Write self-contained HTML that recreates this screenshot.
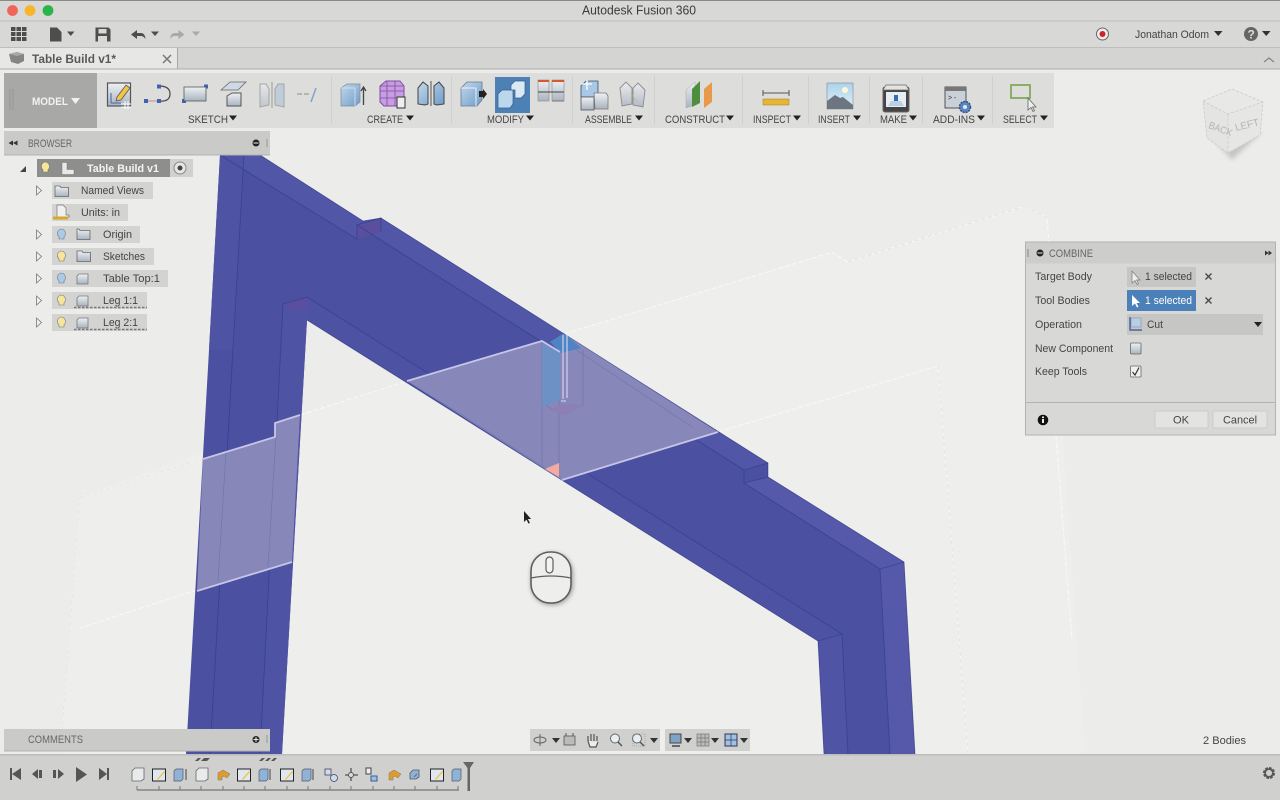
<!DOCTYPE html>
<html><head><meta charset="utf-8"><title>Autodesk Fusion 360</title>
<style>
html,body{margin:0;padding:0;width:1280px;height:800px;overflow:hidden;background:#ecedeb}
svg{display:block;filter:blur(.3px)}
text{font-family:"Liberation Sans",sans-serif;font-size:11px;fill:#444}
</style></head><body>
<svg width="1280" height="800" viewBox="0 0 1280 800" xmlns="http://www.w3.org/2000/svg">
<defs>
<linearGradient id="box" x1="0" y1="0" x2="0" y2="1"><stop offset="0" stop-color="#eef1f4"/><stop offset="1" stop-color="#a9b3c0"/></linearGradient>
<linearGradient id="bl" x1="0" y1="0" x2="1" y2="1"><stop offset="0" stop-color="#c3d8ec"/><stop offset="1" stop-color="#6f9cc8"/></linearGradient>
<linearGradient id="sky" x1="0" y1="0" x2="0" y2="1"><stop offset="0" stop-color="#a9d4ee"/><stop offset="1" stop-color="#e4f0f4"/></linearGradient>
<filter id="bs" x="-30%" y="-30%" width="160%" height="160%"><feGaussianBlur stdDeviation="2.5"/></filter>
</defs>

<!-- viewport background -->
<rect width="1280" height="800" fill="#ecedeb"/>
<polygon points="62,754 80,497 300,415 564,334 800,262 832,252 848,262 1025,206 1047,218 1085,754" fill="#eeefed"/>
<g fill="none" stroke="#f9f9f8" stroke-width="1" stroke-dasharray="5 2">
<polyline points="80,497 203,459"/><polyline points="300,415 407,381"/><polyline points="564,334 800,262 832,252 848,262 1025,206 1047,218 1049,243"/>
<polyline points="62,730 80,497"/><polyline points="718,432 938,366 968,754"/><polyline points="197,590 80,628"/>
<polyline points="1056,436 1072,640"/>
</g>
<g fill="none" stroke="#dcdddb" stroke-width=".6" stroke-dasharray="4 3">
<polyline points="80,497 203,459"/><polyline points="62,730 80,497"/><polyline points="938,366 968,754"/><polyline points="1025,206 1047,218"/><polyline points="848,262 1025,206"/>
</g>

<!-- blue frame -->
<polygon points="220,155 260,155 363,221 381,218 768,463 768,477 904,562 915,754 824,754 818,641 307,320 282,754 186,754 209,350" fill="#4c50a0"/>
<polygon points="220,155 260,155 363,221 357,225 357,239" fill="#5256a7"/>
<polygon points="381,218 768,463 744,470 357,225" fill="#5256a7"/>
<polygon points="744,483 768,477 904,562 880,569" fill="#5659aa"/>
<polygon points="880,569 904,562 915,754 890,754" fill="#5659aa"/>
<polygon points="357,225 381,218 381,232 357,239" fill="#5a4f9e"/>
<polygon points="283,304 307,297 842,634 818,641 307,320" fill="#4e52a3"/>
<polygon points="283,304 307,297 307,320 282,754 260,754" fill="#4f53a4"/>
<polygon points="818,641 842,634 848,754 824,754" fill="#5054a4"/>
<polygon points="283,304 307,297 307,310 290,310" fill="#5a4f9e"/>
<polygon points="220,155 244,155 234,350 209,350" fill="#4f53a4"/>
<g fill="none" stroke="#2f3c92" stroke-width=".9" opacity=".7">
<polyline points="220,155 357,239 357,225 744,470 744,483 880,569 890,754"/>
<polyline points="880,569 904,562"/>
<polyline points="744,470 768,463"/><polyline points="744,483 768,477"/>
<polyline points="244,155 210,754"/>
<polyline points="357,225 381,218 381,232"/>
<polyline points="283,304 307,297 842,634 848,754"/>
<polyline points="283,304 260,754"/>
<polyline points="818,641 842,634"/>
</g>
<polyline points="260,155 363,221 381,218 768,463 768,477 904,562 915,754" fill="none" stroke="#27307f" stroke-width=".8" opacity=".6"/>
<polyline points="307,320 818,641 824,754" fill="none" stroke="#27307f" stroke-width=".8" opacity=".6"/>

<!-- translucent plane bands -->
<polygon points="203,459 275,437 275,423 300,415 292,562 197,591" fill="#8787ba"/>
<g fill="none" stroke="#6c70ad" stroke-width=".7" opacity=".8"><polyline points="226,452 218,582"/><polyline points="276,436 268,567"/></g>
<polygon points="407,381 542,341 560,352 564,334 718,432 562,480" fill="#8787ba"/>
<g fill="none" stroke="#6b6fae" stroke-width=".7" opacity=".75">
<polyline points="407,381 470,420 545,468 561,477"/><polyline points="572,347 692,427"/>
<polyline points="542,343 542,466"/><polyline points="559,400 559,463"/><polyline points="583,350 583,405 560,414 542,403"/>
</g>
<polygon points="542,343 560,353 560,400 542,407" fill="#6d90c5"/>
<polygon points="550,342 564,333 581,348 561,353" fill="#4f84c4"/>
<polygon points="560,404 583,405 564,416 550,410" fill="#8b7fb6"/>
<polygon points="545,469 559,463 559,477" fill="#f5a9a0"/>
<g fill="none" stroke="#c6c6e8" stroke-width="1.800">
<polyline points="203,459 275,437 275,423 300,415"/><polyline points="197,591 292,562"/>
<polyline points="407,381 542,341 560,352"/><polyline points="562,480 718,432"/>
</g>
<path d="M563 335V399M567 335V398M561 401h5" fill="none" stroke="#d9daf0" stroke-width="1.100"/>

<!-- cursor + mouse -->
<path d="M524 511v11l2.500-2.400 2 4 1.400-.7-2-3.900h3.200z" fill="#222"/>
<rect x="531" y="553" width="42" height="52" rx="20" fill="#555" opacity=".55" filter="url(#bs)"/>
<rect x="531" y="552" width="40" height="51" rx="19" fill="#eeeeec" stroke="#5f5f5f" stroke-width="1.600"/>
<path d="M531 578q20-4 40 0" fill="none" stroke="#5f5f5f" stroke-width="1.300"/>
<rect x="546" y="557" width="7" height="16" rx="3.500" fill="#f3f3f1" stroke="#5f5f5f" stroke-width="1.200"/>

<!-- view cube -->
<polygon points="1210,135 1262,132 1232,160" fill="#a0a09e" opacity=".5" filter="url(#bs)"/>
<polygon points="1203,101 1232,89 1263,102 1228,114" fill="#e8e8e6"/>
<polygon points="1203,101 1228,114 1228,153 1207,138" fill="#e4e4e2"/>
<polygon points="1228,114 1263,102 1260,135 1228,153" fill="#e6e6e4"/>
<g fill="none" stroke="#cbcbc9" stroke-width=".8" stroke-dasharray="3 1.500"><polyline points="1203,101 1232,89 1263,102 1260,135 1228,153 1207,138 1203,101"/><polyline points="1203,101 1228,114 1263,102"/><polyline points="1228,114 1228,153"/></g>
<text transform="translate(1208,128) rotate(20) scale(.9,1)" style="font-size:10px;fill:#b4b4b2">BACK</text>
<text transform="translate(1236,131) rotate(-14)" style="font-size:10px;fill:#b4b4b2">LEFT</text>

<!-- title bar -->
<rect width="1280" height="21" fill="#d8d8d6"/>
<rect width="1280" height="1" fill="#8a8a88"/>
<circle cx="12.500" cy="10.500" r="5.400" fill="#f0655a"/><circle cx="30" cy="10.500" r="5.400" fill="#f6b52d"/><circle cx="48" cy="10.500" r="5.400" fill="#2cb34a"/>
<text x="582" y="14.500" textLength="114" lengthAdjust="spacingAndGlyphs" style="font-size:12.500px;fill:#3c3c3c">Autodesk Fusion 360</text>

<!-- app bar -->
<rect y="21" width="1280" height="27" fill="#d8d9d7"/>
<rect y="20.500" width="1280" height="1" fill="#bdbdbb"/>
<rect y="47.500" width="1280" height="1" fill="#a4a4a2"/>
<g fill="#4e4e4e"><path d="M11 27h4.500v4H11zM16.500 27H21v4h-4.500zM22 27h4.500v4H22zM11 32h4.500v4H11zM16.500 32H21v4h-4.500zM22 32h4.500v4H22zM11 37h4.500v4H11zM16.500 37H21v4h-4.500zM22 37h4.500v4H22z"/>
<path d="M50 27.500h7l4.500 4.500v9.500H50z"/><path d="M67 31.500h7.500l-3.750 4.500z"/>
<path d="M95.500 27.500h13l2 2v12h-15zM98.500 29v4.500h8V29zM98 36v5.500h9V36z" fill-rule="evenodd"/>
<path d="M131 34.500l6-4.500v3h4q4 0 4.500 6-2-3-4.500-3h-4v3z"/><path d="M151 31.500h8l-4 4.500z"/></g>
<g fill="#a9a9a7"><path d="M184.500 34.500l-6-4.500v3h-4q-4 0-4.500 6 2-3 4.500-3h4v3z"/><path d="M192 31.500h8l-4 4.500z"/></g>
<circle cx="1102.500" cy="34" r="6" fill="#eee" stroke="#666" stroke-width="1"/><circle cx="1102.500" cy="34" r="3" fill="#d2232a"/>
<text x="1135" y="38" textLength="74" lengthAdjust="spacingAndGlyphs">Jonathan Odom</text>
<path d="M1214 31h8.500l-4.250 5z" fill="#333"/>
<circle cx="1251" cy="34" r="7" fill="#666"/><text x="1247.500" y="38.500" style="font-size:12px;font-weight:bold;fill:#ddd">?</text>
<path d="M1262 31h8.500l-4.250 5z" fill="#333"/>

<!-- tab bar -->
<rect y="48" width="1280" height="21" fill="#d4d5d3"/>
<rect y="48" width="177" height="21" fill="#e7e8e6"/>
<rect x="177" y="48" width="1" height="21" fill="#a8a8a6"/>
<rect y="68.500" width="1280" height="1" fill="#aeaeac"/>
<path d="M9 54l8-2 7 2v7l-6 3-7-2z" fill="#858583"/><path d="M9 54l8 2 7-2-7-2z" fill="#a9a9a7"/>
<text x="32" y="63" textLength="84" lengthAdjust="spacingAndGlyphs" style="font-weight:bold;font-size:11.500px;fill:#585858">Table Build v1*</text>
<path d="M163 55l8 8M171 55l-8 8" stroke="#777" stroke-width="1.500"/>
<path d="M1264 62l5-4 5 4" fill="none" stroke="#888" stroke-width="1.300"/>

<!-- toolbar -->
<rect x="4" y="73" width="1050" height="55" fill="#dddedc"/>
<rect x="4" y="73" width="93" height="55" fill="#a8a9a7"/>
<path d="M10 89v21M13 89v21" stroke="#8e8e8c" stroke-width=".7"/>
<text x="32" y="105" textLength="36" lengthAdjust="spacingAndGlyphs" style="font-weight:bold;fill:#f2f2f2">MODEL</text>
<path d="M71 98h9l-4.500 6z" fill="#f2f2f2"/>
<g fill="#d0d0ce"><rect x="331" y="76" width="1" height="48"/><rect x="451" y="76" width="1" height="48"/><rect x="572" y="76" width="1" height="48"/><rect x="654" y="76" width="1" height="48"/><rect x="742" y="76" width="1" height="48"/><rect x="808" y="76" width="1" height="48"/><rect x="869" y="76" width="1" height="48"/><rect x="922" y="76" width="1" height="48"/><rect x="992" y="76" width="1" height="48"/></g>
<g>
<text x="188" y="123" textLength="40" lengthAdjust="spacingAndGlyphs">SKETCH</text>
<text x="367" y="123" textLength="36" lengthAdjust="spacingAndGlyphs">CREATE</text>
<text x="487" y="123" textLength="37" lengthAdjust="spacingAndGlyphs">MODIFY</text>
<text x="585" y="123" textLength="47" lengthAdjust="spacingAndGlyphs">ASSEMBLE</text>
<text x="665" y="123" textLength="60" lengthAdjust="spacingAndGlyphs">CONSTRUCT</text>
<text x="753" y="123" textLength="38" lengthAdjust="spacingAndGlyphs">INSPECT</text>
<text x="818" y="123" textLength="32" lengthAdjust="spacingAndGlyphs">INSERT</text>
<text x="880" y="123" textLength="27" lengthAdjust="spacingAndGlyphs">MAKE</text>
<text x="933" y="123" textLength="42" lengthAdjust="spacingAndGlyphs">ADD-INS</text>
<text x="1003" y="123" textLength="34" lengthAdjust="spacingAndGlyphs">SELECT</text>
</g>
<g fill="#222"><path d="M229 115.500h8l-4 5zM406 115.500h8l-4 5zM526 115.500h8l-4 5zM635 115.500h8l-4 5zM726 115.500h8l-4 5zM793 115.500h8l-4 5zM853 115.500h8l-4 5zM909 115.500h8l-4 5zM977 115.500h8l-4 5zM1040 115.500h8l-4 5z"/></g>

<!-- sketch icons -->
<rect x="107.500" y="83" width="23" height="23" fill="url(#box)" stroke="#555" stroke-width="1.200"/>
<path d="M111 103V93M111 103h10" stroke="#3f64b0" stroke-width="1" fill="none"/>
<path d="M117 97l9-12 4 3-9 12-5 1z" fill="#f0c54a" stroke="#555" stroke-width=".8"/>
<path d="M121 104h10M121 107h10M125 101v8M128 101v8" stroke="#fff" stroke-width="1"/>
<path d="M145 101h14" stroke="#c48a8a" stroke-width="1"/><path d="M159 86q11 0 11 8t-11 7" fill="none" stroke="#444" stroke-width="1.200"/>
<g fill="#3f64b0"><rect x="144" y="99" width="4" height="4"/><rect x="157" y="99" width="4" height="4"/><rect x="157" y="84.500" width="4" height="4"/>
<rect x="182" y="99" width="4" height="4"/><rect x="204" y="84.500" width="4" height="4"/></g>
<rect x="184" y="87" width="22" height="14" fill="url(#box)" stroke="#555" stroke-width=".8"/>
<path d="M221 90l9-8h16l-8 8z" fill="#cfd9e6" stroke="#666" stroke-width=".8"/>
<path d="M227 96l5-3h9v13h-14z" fill="url(#box)" stroke="#555" stroke-width="1"/>
<g opacity=".55"><path d="M260 84h6l3 5v16l-9 2z" fill="url(#box)" stroke="#777"/><path d="M272 82v26" stroke="#666"/><path d="M284 84h-6l-3 5v16l9 2z" fill="#a9bfd8" stroke="#777"/>
<path d="M297 94h12" stroke="#666" stroke-width="1.200" stroke-dasharray="5 2"/><path d="M316 88l-5 14" stroke="#3f6fc0" stroke-width="1.500"/></g>

<!-- create icons -->
<path d="M341 88l6-4h13v18l-5 4h-14z" fill="url(#bl)" stroke="#7a8b9d" stroke-width=".7"/><path d="M341 88h14v18" fill="none" stroke="#dbe7f2" stroke-width=".8"/>
<path d="M363.500 105V88M361 91l2.500-4 2.500 4" fill="none" stroke="#444" stroke-width="1.300"/>
<path d="M380 86l6-5h14l4 5v17l-5 3h-15l-4-4z" fill="#c79ce0" stroke="#7d4fa0"/>
<path d="M380 91h24M380 98h24M387 81v25M395 81v25M380 86h24" stroke="#7d4fa0" stroke-width=".8"/>
<rect x="397" y="97" width="8" height="11" fill="#eee" stroke="#333"/>
<path d="M418 88l5-6 5 4v18l-3 1-7-1zM444 88l-5-6-5 4v18l3 1 7-1z" fill="url(#bl)" stroke="#444" stroke-width="1"/><path d="M431 81v25" stroke="#555"/>
<!-- modify icons -->
<path d="M461 88l6-6h15v18l-5 6h-16z" fill="url(#bl)" stroke="#6a7b8d" stroke-width=".8"/><path d="M461 88h15v18" fill="none" stroke="#fff" stroke-width=".8"/>
<path d="M479 91h4v-2l4 5-4 5v-2h-4z" fill="#222"/>
<rect x="495" y="77" width="35" height="36" fill="#4d80b4"/>
<path d="M498 94l4-4h11v14l-3 4h-12z" fill="#bcd6ee" stroke="#33608e" stroke-width=".7"/>
<path d="M511 85l4-4h10v13l-4 4h-6v-8h-4z" fill="#dbe9f5" stroke="#33608e" stroke-width=".7"/>
<rect x="538" y="80" width="11" height="21" fill="url(#box)" stroke="#888" stroke-width=".6"/><rect x="552" y="80" width="12" height="21" fill="url(#box)" stroke="#888" stroke-width=".6"/>
<path d="M538 81h11M552 81h12" stroke="#d85a2a" stroke-width="2"/><path d="M538 92h26" stroke="#444" stroke-width="1"/><path d="M552 101h12" stroke="#777"/>
<!-- assemble -->
<path d="M581 86l5-5h12v16h-17z" fill="#a9c8e6" stroke="#3a4f66" stroke-width=".8"/>
<rect x="581" y="97" width="13" height="13" fill="url(#box)" stroke="#555" stroke-width=".8"/>
<path d="M594 93h12l2 3v13h-13z" fill="url(#box)" stroke="#777" stroke-width=".8"/>
<path d="M582 84h10M587 80v10" stroke="#fff" stroke-width="1.300"/>
<g opacity=".8"><path d="M620 88l6-6 6 6v16l-10 2zM645 90l-7-7-5 5v17l10 2z" fill="url(#box)" stroke="#777" stroke-width=".9"/><path d="M631 93l6 9" stroke="#d0a060" stroke-dasharray="2 1"/></g>
<!-- construct -->
<path d="M686 90l9-8v23l-9 3z" fill="url(#box)" stroke="#aaa" stroke-width=".5"/>
<path d="M692 89l8-8v22l-8 4z" fill="#4e8f3f"/>
<path d="M704 89l8-7v20l-8 6z" fill="#e89a4a"/>
<!-- inspect -->
<path d="M763 93h26M763 90v6M789 90v6" stroke="#555" stroke-width="1" fill="none"/>
<rect x="763" y="99" width="26" height="6" fill="#e8b637" stroke="#a07a20" stroke-width=".5"/>
<!-- insert -->
<rect x="827" y="83" width="26" height="26" fill="url(#sky)" stroke="#777" stroke-width=".5"/>
<circle cx="845" cy="90" r="3" fill="#fff8d8"/>
<path d="M827 109v-8l8-6 5 3 3-1 10 8v4z" fill="#6c7580"/>
<!-- make -->
<rect x="883" y="87" width="26" height="25" rx="2" fill="#444" stroke="#666"/>
<rect x="886" y="92" width="20" height="15" fill="#e8edf2"/>
<path d="M888 106h16l-3-5h-10z" fill="#bcd0e4"/><path d="M894 95h4v6h-4z" fill="#2f6fb5"/>
<path d="M883 90l3-5h20l3 5z" fill="#e3e3e1" stroke="#666" stroke-width=".7"/>
<!-- add-ins -->
<rect x="945" y="87" width="21" height="21" fill="#c9d0d8" stroke="#333" stroke-width=".8"/>
<rect x="945" y="87" width="21" height="4" fill="#777"/>
<text x="948" y="100" style="font-size:7px;fill:#333">&gt; -</text>
<circle cx="965" cy="107" r="5.500" fill="#5a86c2" stroke="#2f4f88" stroke-width="1.500" stroke-dasharray="2 1"/><circle cx="965" cy="107" r="2" fill="#dfe9f5"/>
<!-- select -->
<rect x="1011" y="85" width="19" height="13" fill="none" stroke="#84a85a" stroke-width="1.800"/>
<path d="M1028 98v12l3-2.500 2 4 1.500-.8-2-3.700h3.500z" fill="#eee" stroke="#666" stroke-width=".8"/>

<!-- browser -->
<rect x="4" y="131" width="266" height="24" fill="#cacbc9"/>
<rect x="4" y="154.500" width="266" height="1" fill="#b2b2b0"/>
<path d="M13 140.500l-4.500 2.500 4.500 2.500zM17.500 140.500l-4.500 2.500 4.500 2.500z" fill="#333"/>
<text x="28" y="147" textLength="44" lengthAdjust="spacingAndGlyphs" style="fill:#666">BROWSER</text>
<circle cx="256" cy="143" r="3.500" fill="#222"/><rect x="253.500" y="142.500" width="5" height="1" fill="#eee"/>
<path d="M267 139v8" stroke="#888" stroke-width=".8"/>

<rect x="37" y="159" width="133" height="18" fill="#8e8f8d"/><rect x="170" y="159" width="23" height="18" fill="#d1d2d0"/>
<rect x="52" y="182" width="101" height="17" fill="#d3d4d2"/>
<rect x="52" y="204" width="76" height="17" fill="#d3d4d2"/>
<rect x="52" y="226" width="88" height="17" fill="#d3d4d2"/>
<rect x="52" y="248" width="102" height="17" fill="#d3d4d2"/>
<rect x="52" y="270" width="116" height="17" fill="#d3d4d2"/>
<rect x="52" y="292" width="95" height="17" fill="#d3d4d2"/>
<rect x="52" y="314" width="95" height="17" fill="#d3d4d2"/>
<path d="M20 172l6-6v6z" fill="#444"/>
<g fill="#f0f0ee" stroke="#777" stroke-width=".8"><path d="M36.500 186l5 4.500-5 4.500z"/><path d="M36.500 230l5 4.500-5 4.500z"/><path d="M36.500 252l5 4.500-5 4.500z"/><path d="M36.500 274l5 4.500-5 4.500z"/><path d="M36.500 296l5 4.500-5 4.500z"/><path d="M36.500 318l5 4.500-5 4.500z"/></g>
<!-- bulbs -->
<g stroke="#777" stroke-width=".6">
<path d="M45 162a4.500 4.500 0 0 1 3 7.800v2.200h-5v-2.200A4.500 4.500 0 0 1 45 162z" fill="#f6e59a"/>
<path d="M61 229a4.500 4.500 0 0 1 3 7.800v2.200h-5v-2.200A4.500 4.500 0 0 1 61 229z" fill="#a8cbe8"/>
<path d="M61 251a4.500 4.500 0 0 1 3 7.800v2.200h-5v-2.200A4.500 4.500 0 0 1 61 251z" fill="#f6e59a"/>
<path d="M61 273a4.500 4.500 0 0 1 3 7.800v2.200h-5v-2.200A4.500 4.500 0 0 1 61 273z" fill="#a8cbe8"/>
<path d="M61 295a4.500 4.500 0 0 1 3 7.800v2.200h-5v-2.200A4.500 4.500 0 0 1 61 295z" fill="#f6e59a"/>
<path d="M61 317a4.500 4.500 0 0 1 3 7.800v2.200h-5v-2.200A4.500 4.500 0 0 1 61 317z" fill="#f6e59a"/>
</g>
<path d="M62 162.500h5v7h7v5H62z" fill="#e9e9e7" stroke="#777" stroke-width=".5"/>
<circle cx="180" cy="168" r="6" fill="#e8e8e6" stroke="#888"/><circle cx="180" cy="168" r="2.500" fill="#444"/>
<!-- folders -->
<g stroke="#666" stroke-width=".8"><path d="M55 186h5l1 1.500h7.500v9H55z" fill="url(#box)"/>
<path d="M77 229h2l1 1.500h10v9H77z" fill="url(#box)"/><path d="M77 251h5l1 1.500h7.500v9H77z" fill="url(#box)"/></g>
<path d="M57 205h6l3 3v7h3v2H57z" fill="#f0f0ee" stroke="#777" stroke-width=".7"/><rect x="53" y="216.500" width="15" height="3" fill="#d6a92e"/>
<g stroke="#777" stroke-width=".8" fill="url(#box)"><path d="M79 274h9v10h-11v-8z"/><path d="M79 296h9v10h-11v-8z"/><path d="M79 318h9v10h-11v-8z"/></g>
<g>
<text x="87" y="172" textLength="72" lengthAdjust="spacingAndGlyphs" style="font-weight:bold;fill:#f4f4f4">Table Build v1</text>
<text x="81" y="194" textLength="63" lengthAdjust="spacingAndGlyphs">Named Views</text>
<text x="81" y="216" textLength="39" lengthAdjust="spacingAndGlyphs">Units: in</text>
<text x="103" y="238" textLength="29" lengthAdjust="spacingAndGlyphs">Origin</text>
<text x="103" y="260" textLength="42" lengthAdjust="spacingAndGlyphs">Sketches</text>
<text x="103" y="282" textLength="57" lengthAdjust="spacingAndGlyphs">Table Top:1</text>
<text x="103" y="304" textLength="35" lengthAdjust="spacingAndGlyphs">Leg 1:1</text>
<text x="103" y="326" textLength="35" lengthAdjust="spacingAndGlyphs">Leg 2:1</text>
</g>
<path d="M74 307.500h73M74 329.500h73" stroke="#777" stroke-width="1.500" stroke-dasharray="2.500 1.500"/>

<!-- comments -->
<rect x="4" y="729" width="266" height="22" fill="#cacbc9"/>
<rect x="4" y="750.500" width="266" height="1" fill="#b2b2b0"/>
<text x="28" y="743" textLength="55" lengthAdjust="spacingAndGlyphs" style="fill:#666">COMMENTS</text>
<circle cx="256" cy="739.500" r="3.500" fill="#222"/><path d="M253.500 739.500h5M256 737v5" stroke="#eee" stroke-width="1"/>
<path d="M267 735v8" stroke="#888" stroke-width=".8"/>

<!-- nav bar -->
<rect x="530" y="729" width="130" height="22" fill="#d0d1cf"/>
<rect x="665" y="729" width="85" height="22" fill="#d0d1cf"/>
<g fill="#333"><path d="M552 738h8l-4 5zM650 738h8l-4 5zM684 738h8l-4 5zM711 738h8l-4 5zM740 738h8l-4 5z"/></g>
<ellipse cx="540" cy="740" rx="6" ry="3" fill="none" stroke="#666"/><path d="M540 734v12" stroke="#666"/>
<rect x="564" y="736" width="11" height="9" fill="#bbb" stroke="#555" stroke-width=".8"/><path d="M566 733v3M573 733v3" stroke="#555"/>
<path d="M588 741v-5M591 741v-7M594 741v-7M597 741v-5M588 741l2 6h6l2-5" fill="#eee" stroke="#555" stroke-width="1.200"/>
<circle cx="615" cy="738.500" r="4.500" fill="#e8eef2" stroke="#666"/><path d="M618 742l4 4" stroke="#555" stroke-width="1.500"/>
<circle cx="637" cy="738.500" r="4.500" fill="#e8eef2" stroke="#666"/><path d="M640 742l4 4" stroke="#555" stroke-width="1.500"/><rect x="633" y="734" width="12" height="12" fill="none" stroke="#888" stroke-width=".6" stroke-dasharray="1 1"/>
<rect x="670" y="734" width="11" height="9" fill="#7fa3c8" stroke="#444"/><path d="M672 746h8" stroke="#444" stroke-width="1.500"/>
<g stroke="#777" stroke-width=".7" fill="#bbb"><rect x="697" y="734" width="12" height="12"/><path d="M701 734v12M705 734v12M697 738h12M697 742h12" fill="none"/></g>
<rect x="725" y="734" width="12" height="12" fill="#9ec2e2" stroke="#335"/><path d="M731 734v12M725 740h12" stroke="#335" stroke-width=".7"/>
<text x="1203" y="744" textLength="43" lengthAdjust="spacingAndGlyphs">2 Bodies</text>

<!-- combine panel -->
<rect x="1025.500" y="242" width="250" height="193" fill="#d8d9d7" stroke="#b3b3b1" stroke-width="1"/>
<rect x="1026" y="242.500" width="249" height="21" fill="#cdcecc"/>
<rect x="1026" y="402" width="249" height="1" fill="#b3b3b1"/>
<path d="M1028 249v8" stroke="#888"/>
<circle cx="1040" cy="253" r="3.500" fill="#222"/><rect x="1037.500" y="252.500" width="5" height="1" fill="#eee"/>
<text x="1049" y="257" textLength="44" lengthAdjust="spacingAndGlyphs" style="fill:#666">COMBINE</text>
<path d="M1265 250.500l3.500 2.500-3.500 2.500zM1268.500 250.500l3.500 2.500-3.500 2.500z" fill="#333"/>
<g>
<text x="1035" y="280" textLength="57" lengthAdjust="spacingAndGlyphs">Target Body</text>
<text x="1035" y="304" textLength="55" lengthAdjust="spacingAndGlyphs">Tool Bodies</text>
<text x="1035" y="328" textLength="47" lengthAdjust="spacingAndGlyphs">Operation</text>
<text x="1035" y="352" textLength="78" lengthAdjust="spacingAndGlyphs">New Component</text>
<text x="1035" y="375" textLength="52" lengthAdjust="spacingAndGlyphs">Keep Tools</text>
</g>
<rect x="1127" y="267" width="69" height="20" fill="#c6c7c5"/>
<rect x="1127" y="290" width="69" height="21" fill="#4b80b8"/>
<rect x="1127" y="314" width="136" height="21" fill="#c6c7c5"/>
<path d="M1132 271v12l3-2.500 2 4 1.500-.8-2-3.700h3.500z" fill="#eee" stroke="#777" stroke-width=".7"/>
<path d="M1132 295v11l3-2.500 2 4 1.500-.8-2-3.700h3.500z" fill="#fff"/>
<text x="1145" y="280" textLength="47" lengthAdjust="spacingAndGlyphs">1 selected</text>
<text x="1145" y="304" textLength="47" lengthAdjust="spacingAndGlyphs" style="fill:#fff">1 selected</text>
<path d="M1205.500 273.500l6 6M1211.500 273.500l-6 6M1205.500 297.500l6 6M1211.500 297.500l-6 6" stroke="#444" stroke-width="1.300"/>
<rect x="1131" y="318" width="10" height="9" fill="#b9cde4" stroke="#7d94b0" stroke-width=".6"/>
<path d="M1130 317v13h12" fill="none" stroke="#38508f" stroke-width="1.200"/>
<text x="1147" y="328" textLength="16" lengthAdjust="spacingAndGlyphs">Cut</text>
<path d="M1254 322h8l-4 5z" fill="#222"/>
<rect x="1130.500" y="343" width="10.500" height="11" rx="1" fill="url(#box)" stroke="#666" stroke-width=".8"/>
<rect x="1130.500" y="366" width="10.500" height="11" rx="1" fill="#f0f0ee" stroke="#666" stroke-width=".8"/>
<path d="M1132.500 372l2.500 3 4-7.500" fill="none" stroke="#333" stroke-width="1.200"/>
<circle cx="1043" cy="420" r="5.300" fill="#111"/><rect x="1042" y="419" width="2" height="4" fill="#eee"/><rect x="1042" y="416.500" width="2" height="1.600" fill="#eee"/>
<rect x="1155" y="411" width="53" height="17" fill="#e3e4e2" stroke="#c4c4c2" stroke-width=".7"/>
<rect x="1213" y="411" width="54" height="17" fill="#e3e4e2" stroke="#c4c4c2" stroke-width=".7"/>
<text x="1173" y="423.500" textLength="16" lengthAdjust="spacingAndGlyphs">OK</text>
<text x="1223" y="423.500" textLength="34" lengthAdjust="spacingAndGlyphs">Cancel</text>

<!-- timeline -->
<rect y="754" width="1280" height="46" fill="#d0d1cf"/>
<rect y="754" width="1280" height="1.500" fill="#bcbcba"/>
<g fill="#555">
<path d="M10 768h2v12h-2zM21 768v12l-9-6z"/><path d="M32 774l6-5v10z"/><rect x="39" y="770" width="3" height="8"/>
<rect x="53" y="770" width="3" height="8"/><path d="M64 774l-6-5v10z"/>
<path d="M76 767v15l11-7.500z"/>
<path d="M99 768v12l8-6z"/><rect x="107" y="768" width="2" height="12"/>
</g>
<path d="M137 790H459" stroke="#777" stroke-width="1.300"/>
<g stroke="#777" stroke-width="1"><path d="M137 786v4M159 786v4M180 786v4M201 786v4M223 786v4M244 786v4M265 786v4M287 786v4M308 786v4M330 786v4M351 786v4M373 786v4M394 786v4M415 786v4M437 786v4M458 786v4"/></g>
<!-- timeline items -->
<g stroke="#666" stroke-width=".8" fill="#e8eaec"><path d="M132 771l3-3h9v11l-3 2h-9z"/><path d="M196 771l3-3h9v11l-3 2h-9z"/></g>
<g stroke="#222" stroke-width="1" fill="#dfe8f1">
<rect x="152.500" y="769" width="13" height="12"/><rect x="237.500" y="769" width="13" height="12"/><rect x="280.500" y="769" width="13" height="12"/><rect x="430.500" y="769" width="13" height="12"/></g>
<g fill="#f0c54a"><path d="M157 779l7-8 1 1-7 8zM242 779l7-8 1 1-7 8zM285 779l7-8 1 1-7 8zM435 779l7-8 1 1-7 8z"/></g>
<g fill="#8fb3d8" stroke="#556" stroke-width=".7"><path d="M174 771l2-2h7v10l-2 2h-7z"/><path d="M259 771l2-2h7v10l-2 2h-7z"/><path d="M302 771l2-2h7v10l-2 2h-7z"/><path d="M452 771l2-2h7v10l-2 2h-7z"/></g>
<g stroke="#444" stroke-width="1" fill="none"><path d="M186 780v-11M270 780v-11M313 780v-11"/></g>
<g fill="#e09b2e" stroke="#777" stroke-width=".5"><path d="M218 780v-7l5-3 7 4-3 4-3-2-2 1v3z"/><path d="M389 780v-7l5-3 7 4-3 4-3-2-2 1v3z"/></g>
<g fill="#555"><path d="M195 761h3l3-3h-3zM201 761h3l3-3h-3zM204 761h3l3-3h-3zM259 761h3l3-3h-3zM265 761h3l3-3h-3zM271 761h3l3-3h-3z"/></g>
<g fill="#cfdcea" stroke="#446" stroke-width=".8"><rect x="325" y="769" width="6" height="6"/><circle cx="334" cy="778" r="3.500"/></g>
<path d="M351 768v13M345 775h13" stroke="#555" stroke-width="1.300"/><circle cx="351" cy="775" r="2.500" fill="#ddd" stroke="#555"/>
<rect x="366" y="768" width="5" height="6" fill="#eee" stroke="#444"/><rect x="371" y="776" width="6" height="5" fill="#9fc0e0" stroke="#2f5f9a"/>
<path d="M410 773l3-3h6v7l-3 2h-6zM414 777l3-3" fill="#8fb3d8" stroke="#556" stroke-width=".8"/>
<path d="M463 762h11l-4 6v23h-2.500v-23z" fill="#666"/>
<!-- gear -->
<circle cx="1269" cy="773" r="4.500" fill="none" stroke="#555" stroke-width="3" stroke-dasharray="2.500 1"/>
<circle cx="1269" cy="773" r="4" fill="none" stroke="#555" stroke-width="1.500"/>
</svg>
</body></html>
